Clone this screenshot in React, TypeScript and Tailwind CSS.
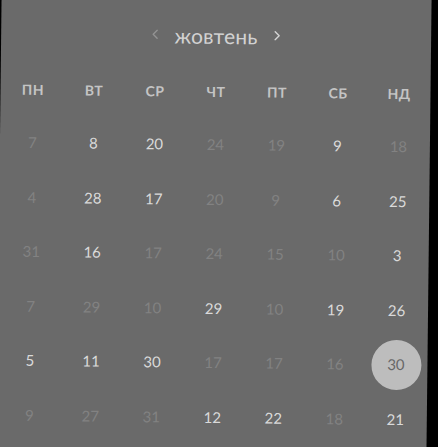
const weekdays = ["ПН", "ВТ", "СР", "ЧТ", "ПТ", "СБ", "НД"];

// [day, active]
const rows: [number, boolean][][] = [
  [[7, false], [8, true], [20, true], [24, false], [19, false], [9, true], [18, false]],
  [[4, false], [28, true], [17, true], [20, false], [9, false], [6, true], [25, true]],
  [[31, false], [16, true], [17, false], [24, false], [15, false], [10, false], [3, true]],
  [[7, false], [29, false], [10, false], [29, true], [10, false], [19, true], [26, true]],
  [[5, true], [11, true], [30, true], [17, false], [17, false], [16, false], [30, true]],
  [[9, false], [27, false], [31, false], [12, true], [22, true], [18, false], [21, true]],
];

function Chevron({ dir, className }: { dir: "left" | "right"; className: string }) {
  return (
    <svg width="8" height="10" viewBox="0 0 8 10" className={className} fill="none">
      <path
        d={dir === "left" ? "M6 1 L2 5 L6 9" : "M2 1 L6 5 L2 9"}
        stroke="currentColor"
        strokeWidth="1.4"
        strokeLinecap="round"
        strokeLinejoin="round"
      />
    </svg>
  );
}

export default function App() {
  return (
    <div className="w-[438px] h-[447px] bg-black overflow-hidden">
      <div
        className="w-[430px] h-[475px] -mt-[12px] -ml-[1px] bg-[#6a6a6a] rotate-[0.65deg] pt-[35px] px-[2px]"
        style={{ fontFamily: "Lato, 'Open Sans', sans-serif" }}
      >
        {/* Month header */}
        <div className="h-[24px] flex items-center justify-center gap-[16px]">
          <Chevron dir="left" className="text-[#939393]" />
          <span className="text-[21px] leading-none text-[#d2d2d2] tracking-[0.2px]">жовтень</span>
          <Chevron dir="right" className="text-[#d4d4d4]" />
        </div>

        {/* Weekdays */}
        <div className="mt-[19px] grid grid-cols-[repeat(7,61px)] h-[51px] items-center">
          {weekdays.map((d) => (
            <div key={d} className="text-center text-[14px] font-bold text-[#c4c4c4] tracking-[0.5px]">
              {d}
            </div>
          ))}
        </div>

        {/* Days */}
        {rows.map((row, ri) => (
          <div key={ri} className="grid grid-cols-[repeat(7,61px)] h-[54.6px] items-center">
            {row.map(([n, active], ci) => {
              const selected = ri === 4 && ci === 6;
              if (selected) {
                return (
                  <div key={ci} className="flex justify-center">
                    <div className="w-[50px] h-[50px] rounded-full bg-[#bdbdbd] flex items-center justify-center text-[15px] text-[#676767]">
                      {n}
                    </div>
                  </div>
                );
              }
              return (
                <div
                  key={ci}
                  className={`text-center text-[15px] ${active ? "text-[#dadada]" : "text-[#828282]"}`}
                >
                  {n}
                </div>
              );
            })}
          </div>
        ))}
      </div>
    </div>
  );
}
